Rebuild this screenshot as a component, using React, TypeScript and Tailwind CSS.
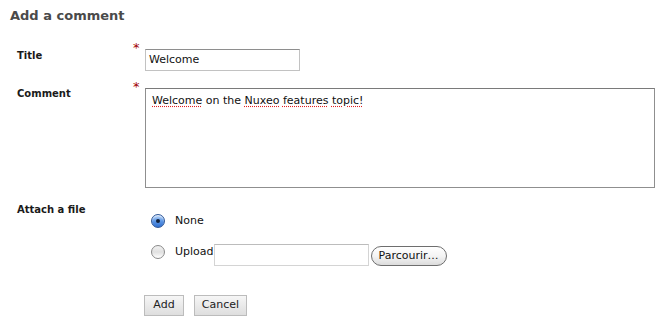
const font = { fontFamily: '"DejaVu Sans", Verdana, sans-serif' };

const Asterisk = () => (
  <div className="w-[12px] text-[13px] leading-[10px] text-[#a00000]">*</div>
);

const Radio = ({ checked }: { checked: boolean }) =>
  checked ? (
    <span className="flex h-[14px] w-[14px] shrink-0 items-center justify-center rounded-full border border-[#2f5797] bg-gradient-to-b from-[#c4dcfa] via-[#5e98e6] to-[#2f6fd0] shadow-[inset_0_1px_1px_rgba(255,255,255,0.7)]">
      <span className="h-[4px] w-[4px] rounded-full bg-[#10203a]" />
    </span>
  ) : (
    <span className="block h-[14px] w-[14px] shrink-0 rounded-full border border-[#8a8a8a] bg-gradient-to-b from-[#f2f2f2] via-[#e0e0e0] to-[#ffffff]" />
  );

export default function App() {
  return (
    <div className="h-[325px] w-[668px] bg-white text-[#111]" style={font}>
      <h1 className="pl-[10px] pt-[8px] text-[13px] font-bold leading-[16px] text-[#4a4a4a]">
        Add a comment
      </h1>

      {/* Title */}
      <div className="mt-[19px] flex items-start">
        <label className="w-[133px] pl-[17px] pt-[7px] text-[10px] font-bold leading-[12px] text-[#1a1a1a]">
          Title
        </label>
        <Asterisk />
        <div className="mt-[6px] flex h-[22px] w-[155px] items-center border border-[#c2c2c2] border-t-[#8e8e8e] px-[3px] text-[11px]">
          Welcome
        </div>
      </div>

      {/* Comment */}
      <div className="mt-[11px] flex items-start">
        <label className="w-[133px] pl-[17px] pt-[6px] text-[10px] font-bold leading-[12px] text-[#1a1a1a]">
          Comment
        </label>
        <Asterisk />
        <div className="mt-[6px] h-[100px] w-[510px] border border-[#8f8f8f] border-t-[#7a7a7a] px-[6px] pt-[5px] text-[11px] leading-[14px]">
          <span className="underline decoration-[#e02020] decoration-dotted underline-offset-2">Welcome</span>{" "}
          on the{" "}
          <span className="underline decoration-[#e02020] decoration-dotted underline-offset-2">Nuxeo</span>{" "}
          <span className="underline decoration-[#e02020] decoration-dotted underline-offset-2">features</span>{" "}
          <span className="underline decoration-[#e02020] decoration-dotted underline-offset-2">topic!</span>
        </div>
      </div>

      {/* Attach a file */}
      <div className="mt-[16px] flex items-start">
        <label className="w-[145px] pl-[17px] text-[10px] font-bold leading-[12px] text-[#1a1a1a]">
          Attach a file
        </label>
        <div className="flex flex-col pl-[6px]">
          <div className="mt-[9px] flex items-center gap-[10px] text-[11px]">
            <Radio checked />
            <span>None</span>
          </div>
          <div className="mt-[14px] flex items-start text-[11px]">
            <div className="mt-[1px] flex">
              <Radio checked={false} />
            </div>
            <span className="ml-[10px] pt-[1px] leading-[14px]">Upload</span>
            <div className="h-[22px] w-[155px] border border-[#d4d4d4] border-t-[#bcbcbc]" />
            <button className="ml-[2px] mt-[2px] h-[20px] rounded-full border border-[#6e6e6e] bg-gradient-to-b from-white via-[#f4f4f4] to-[#dcdcdc] px-[7px] text-[11px] leading-[16px] text-[#111]">
              Parcourir…
            </button>
          </div>
        </div>
      </div>

      {/* Buttons */}
      <div className="mt-[29px] flex gap-[10px] pl-[144px]">
        <button className="h-[21px] w-[40px] border border-[#bcbcbc] bg-gradient-to-b from-[#f6f6f6] to-[#dedede] text-[11px] text-[#222]">
          Add
        </button>
        <button className="h-[21px] w-[53px] border border-[#bcbcbc] bg-gradient-to-b from-[#f6f6f6] to-[#dedede] text-[11px] text-[#222]">
          Cancel
        </button>
      </div>
    </div>
  );
}
